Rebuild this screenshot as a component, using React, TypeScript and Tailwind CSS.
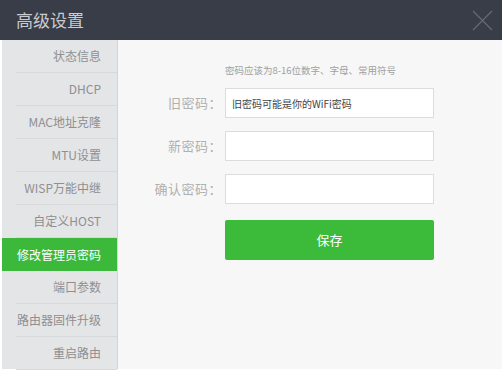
const menu = [
  '状态信息',
  'DHCP',
  'MAC地址克隆',
  'MTU设置',
  'WISP万能中继',
  '自定义HOST',
  '修改管理员密码',
  '端口参数',
  '路由器固件升级',
  '重启路由',
]

const font = { fontFamily: '"Microsoft YaHei", "Noto Sans CJK SC", "Liberation Sans", sans-serif' }

function Field({ label, placeholder }: { label: string; placeholder?: string }) {
  return (
    <div className="flex items-center h-[30px]">
      <div className="w-[107px] text-right text-[13px] text-[#b0b0b0] pr-[3px] tracking-[0.5px]">{label}</div>
      <div className="w-[209px] h-[30px] bg-white border border-[#dcdcdc] flex items-center px-[6px] text-[10px] text-[#444]">
        {placeholder}
      </div>
    </div>
  )
}

export default function App() {
  return (
    <div className="w-[502px] h-[374px] flex flex-col bg-white overflow-hidden" style={font}>
      {/* header */}
      <div className="h-[40px] bg-[#383d47] flex items-center justify-between pl-[16px] pr-[9px] shrink-0">
        <span className="text-[17px] text-[#c9cbcf]">高级设置</span>
        <svg width="21" height="21" viewBox="0 0 21 21">
          <path d="M1 1 L20 20 M20 1 L1 20" stroke="#676c75" strokeWidth="1.1" />
        </svg>
      </div>

      <div className="flex flex-1">
        {/* sidebar */}
        <div className="w-[118px] pl-[2px] flex flex-col shrink-0">
          <div className="bg-[#e4e5e7] border-r border-[#d4d5d7] h-[329px] flex flex-col">
            {menu.map((m) => {
              const active = m === '修改管理员密码'
              return (
                <div
                  key={m}
                  className={
                    active
                      ? 'h-[33px] shrink-0 flex items-center justify-end pr-[16px] bg-[#3cb93a] text-white text-[12px]'
                      : 'h-[33px] shrink-0 flex items-center justify-end pr-[16px] text-[#8e8f91] text-[12px] border-b border-[#d8d9db] ml-[14px]'
                  }
                >
                  {m}
                </div>
              )
            })}
          </div>
        </div>

        {/* content */}
        <div className="flex-1 bg-[#f7f7f7] h-[329px] pt-[24px]">
          <div className="pl-[107px] text-[9.5px] text-[#a0a0a0] h-[12px] leading-[12px]">密码应该为8-16位数字、字母、常用符号</div>
          <div className="mt-[12px] flex flex-col gap-[13px]">
            <Field label="旧密码：" placeholder="旧密码可能是你的WiFi密码" />
            <Field label="新密码：" />
            <Field label="确认密码：" />
          </div>
          <div className="mt-[16px] ml-[107px] w-[209px] h-[40px] bg-[#3cbb3a] rounded-[2px] flex items-center justify-center text-[13px] text-white">
            保存
          </div>
        </div>
      </div>
    </div>
  )
}
